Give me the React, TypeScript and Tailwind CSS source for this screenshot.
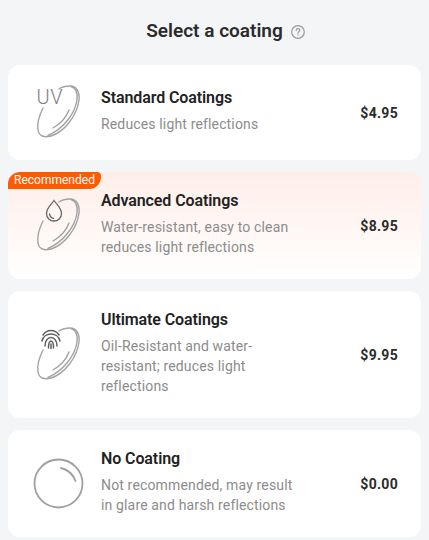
import React from "react";

function Lens() {
  return (
    <g fill="none" stroke="#a3a3a3" strokeWidth="1.400" strokeLinecap="round">
      <path d="M19 30C15 38 13 46 14 52C15 58 20 60 27 58C40 54 53 38 55 22C56 13 52 8 46 8C42 8 38 9 35 11" />
      <path d="M47 8.500C52 10 54 14 53 22C51 36 39 51 24 57.500" />
      <path d="M29 50C36 46 42 40 45 32" />
    </g>
  );
}

function Standard() {
  return (
    <svg width="69" height="69" viewBox="0 0 69 69">
      <Lens />
      <text x="12.500" y="26" fontFamily="Roboto, sans-serif" fontWeight="300" fontSize="20" fill="#808080" letterSpacing="0.500">UV</text>
    </svg>
  );
}

function Advanced() {
  return (
    <svg width="69" height="69" viewBox="0 0 69 69">
      <Lens />
      <path d="M30 9.500C27 14 22.500 17 22.500 22.500C22.500 27 26 30 30 30C34 30 37.500 27 37.500 22.500C37.500 17 33 14 30 9.500Z" fill="#fff6f2" stroke="#666" strokeWidth="1.300" />
      <path d="M25.500 23C26 25.500 27.500 27 29.500 27.300" fill="none" stroke="#666" strokeWidth="1.300" strokeLinecap="round" />
    </svg>
  );
}

function Ultimate() {
  return (
    <svg width="69" height="69" viewBox="0 0 69 69">
      <Lens />
      <g fill="none" stroke="#5f5f5f" strokeWidth="1.500" strokeLinecap="round">
        <path d="M19 15C21 12 24 10.500 27 10.500C30 10.500 33 12 35 15" />
        <path d="M18 21C19 16.500 23 14 27 14C31 14 35 16.500 36 21" />
        <path d="M21 26C21 21 23.500 17.500 27 17.500C30.500 17.500 33 21 33 26" />
        <path d="M24.500 28C24.500 23 25.500 21 27 21C28.500 21 29.500 23 29.500 28" />
        <path d="M27 24V28.500" />
      </g>
    </svg>
  );
}

function NoCoating() {
  return (
    <svg width="69" height="69" viewBox="0 0 69 69">
      <circle cx="34.500" cy="34.500" r="24" fill="none" stroke="#a0a0a0" strokeWidth="1.800" />
      <path d="M37 19C43.500 20.500 49 25.500 51.500 32" fill="none" stroke="#a0a0a0" strokeWidth="1.800" strokeLinecap="round" />
    </svg>
  );
}

const cards = [
  { title: "Standard Coatings", desc: "Reduces light reflections", price: "$4.95", Icon: Standard, rec: false },
  { title: "Advanced Coatings", desc: "Water-resistant, easy to clean reduces light reflections", price: "$8.95", Icon: Advanced, rec: true },
  { title: "Ultimate Coatings", desc: "Oil-Resistant and water-resistant; reduces light reflections", price: "$9.95", Icon: Ultimate, rec: false },
  { title: "No Coating", desc: "Not recommended, may result in glare and harsh reflections", price: "$0.00", Icon: NoCoating, rec: false },
];

export default function App() {
  return (
    <div className="h-[540px] overflow-hidden bg-[#f4f5f7] px-2 font-['Roboto',sans-serif]">
      <div className="flex h-[65px] items-center justify-center gap-2 pb-[3px] pl-[22px]">
        <h1 className="text-[19px] font-semibold leading-6 text-[#2b2b2b]">Select a coating</h1>
        <svg width="14" height="14" viewBox="0 0 14 14" fill="none" className="mt-px">
          <circle cx="7" cy="7" r="6.300" stroke="#999" strokeWidth="1.200" />
          <path d="M5.200 5.500C5.200 4.400 6 3.700 7 3.700C8 3.700 8.800 4.400 8.800 5.300C8.800 6.500 7 6.600 7 8.100" stroke="#999" strokeWidth="1.200" strokeLinecap="round" />
          <circle cx="7" cy="10" r="0.700" fill="#999" />
        </svg>
      </div>
      <div className="flex flex-col gap-3">
        {cards.map(({ title, desc, price, Icon, rec }) => (
          <div
            key={title}
            className={
              rec
                ? "relative flex min-h-[95px] items-center rounded-xl bg-gradient-to-b from-[#ffeee8] to-white pl-4 pr-[23px]"
                : "relative flex min-h-[95px] items-center rounded-xl bg-white pl-4 pr-[23px]"
            }
          >
            {rec && (
              <div className="absolute left-0 top-0 h-[17px] w-[93px] rounded-tl-xl rounded-tr-sm rounded-br-xl bg-[#ff5a00] text-center text-xs leading-[17px] text-white">
                Recommended
              </div>
            )}
            <div className="mr-2 h-[69px] w-[69px] shrink-0">
              <Icon />
            </div>
            <div className="w-[200px] pt-[17px] pb-[22px]">
              <div className="text-base font-semibold leading-6 tracking-[-0.1px] text-[#222]">{title}</div>
              <div className="mt-1 text-sm leading-5 tracking-[0.15px] text-[#8c8c8c]">{desc}</div>
            </div>
            <div className="ml-auto text-sm font-bold leading-5 tracking-[0.3px] text-[#2b2b2b]">{price}</div>
          </div>
        ))}
      </div>
    </div>
  );
}
